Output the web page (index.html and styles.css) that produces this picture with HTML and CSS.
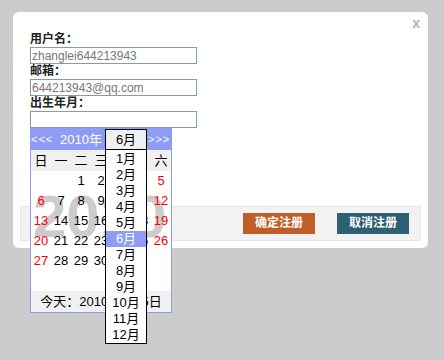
FILE: index.html
```html
<!DOCTYPE html>
<html lang="zh">
<head>
<meta charset="utf-8">
<title>注册</title>
<link rel="stylesheet" href="styles.css">
</head>
<body>
<div class="dialog">
  <span class="close">x</span>
  <div class="form">
    <div class="label">用户名：</div>
    <input class="text" type="text" value="zhanglei644213943">
    <div class="label">邮箱：</div>
    <input class="text" type="text" value="644213943@qq.com">
    <div class="label">出生年月：</div>
    <div class="date-field">
      <input class="text" type="text" value="">
      <div class="cal">
        <div class="cal-head">
          <span class="nav prev">&lt;&lt;&lt;</span>
          <span class="year">2010年</span>
          <span class="month-sel">6月</span>
          <span class="nav next">&gt;&gt;&gt;</span>
        </div>
        <div class="weekdays">
          <span>日</span><span>一</span><span>二</span><span>三</span><span>四</span><span>五</span><span>六</span>
        </div>
        <div class="cal-body">
          <div class="watermark">2010</div>
          <div class="days">
            <span></span><span></span><span>1</span><span>2</span><span>3</span><span>4</span><span class="we">5</span>
            <span class="we">6</span><span>7</span><span>8</span><span>9</span><span>10</span><span>11</span><span class="we">12</span>
            <span class="we">13</span><span>14</span><span>15</span><span>16</span><span>17</span><span>18</span><span class="we">19</span>
            <span class="we">20</span><span>21</span><span>22</span><span>23</span><span>24</span><span>25</span><span class="we">26</span>
            <span class="we">27</span><span>28</span><span>29</span><span>30</span><span></span><span></span><span></span>
            <span></span><span></span><span></span><span></span><span></span><span></span><span></span>
          </div>
        </div>
        <div class="cal-foot">今天：2010年6月5日</div>
        <ul class="month-list">
          <li>1月</li><li>2月</li><li>3月</li><li>4月</li><li>5月</li><li class="sel">6月</li>
          <li>7月</li><li>8月</li><li>9月</li><li>10月</li><li>11月</li><li>12月</li>
        </ul>
      </div>
    </div>
  </div>
  <div class="footer">
    <button class="btn ok">确定注册</button>
    <button class="btn cancel">取消注册</button>
  </div>
</div>
</body>
</html>
```
FILE: styles.css
```css
html, body {
  margin: 0;
  padding: 0;
}
body {
  background: #cccccc;
  width: 444px;
  height: 360px;
  overflow: hidden;
  font-family: "Liberation Sans", "Noto Sans CJK SC", sans-serif;
  font-size: 12px;
  color: #000;
}
.dialog {
  position: relative;
  box-sizing: border-box;
  margin: 12px 0 0 13px;
  width: 415px;
  height: 236px;
  padding: 20px 7px 7px;
  background: #fff;
  border-radius: 6px;
}
.close {
  position: absolute;
  top: 4px;
  right: 8px;
  font-size: 14px;
  line-height: 14px;
  font-weight: bold;
  color: #a9b3c0;
}
.form {
  padding-left: 10px;
}
.label {
  font-weight: bold;
  font-size: 12px;
  line-height: 15px;
  height: 15px;
  color: #222;
}
.text {
  display: block;
  box-sizing: border-box;
  margin: 0;
  width: 167px;
  height: 17px;
  padding: 0 1px;
  border: 1px solid #7f9db9;
  font-family: "Liberation Sans", "Noto Sans CJK SC", sans-serif;
  font-size: 12px;
  font-style: normal;
  color: #777777;
  background: #fff;
  outline: none;
}
.date-field {
  position: relative;
  width: 167px;
}
.cal {
  position: absolute;
  left: 0;
  top: 100%;
  z-index: 5;
  width: 140px;
  border: 1px solid #8e9cf6;
  background: #fff;
  font-size: 13px;
}
.cal-head {
  display: flex;
  align-items: center;
  height: 21px;
  background: #8e9cf6;
  color: #fff;
}
.nav {
  font-size: 11px;
  line-height: 21px;
  letter-spacing: 1px;
}
.prev {
  width: 29px;
}
.year {
  width: 45px;
  font-size: 13px;
  line-height: 21px;
}
.month-sel {
  box-sizing: border-box;
  width: 42px;
  height: 21px;
  border: 1px solid #000;
  background: #f0f0f0;
  color: #000;
  text-align: center;
  line-height: 19px;
}
.next {
  margin-left: 1px;
}
.weekdays {
  display: grid;
  grid-template-columns: repeat(7, 20px);
  height: 21px;
  background: #f0f0f0;
}
.weekdays span {
  text-align: center;
  line-height: 21px;
}
.cal-body {
  position: relative;
}
.watermark {
  position: absolute;
  left: 2px;
  top: 16px;
  font-size: 60px;
  line-height: 60px;
  font-weight: bold;
  color: #cccccc;
}
.days {
  position: relative;
  display: grid;
  grid-template-columns: repeat(7, 20px);
  grid-auto-rows: 20px;
}
.days span {
  text-align: center;
  line-height: 20px;
}
.days .we {
  color: #ff0000;
}
.cal-foot {
  height: 21px;
  line-height: 21px;
  background: #f0f0f0;
  text-align: center;
}
.month-list {
  position: absolute;
  left: 74px;
  top: 21px;
  box-sizing: border-box;
  width: 42px;
  margin: 0;
  padding: 1px 0 0;
  list-style: none;
  background: #fff;
  border: 1px solid #000;
  border-top: none;
}
.month-list li {
  height: 16px;
  line-height: 16px;
  text-align: center;
  font-size: 13px;
}
.month-list .sel {
  background: #8e9cf6;
  color: #fff;
}
.footer {
  box-sizing: border-box;
  margin-top: 78px;
  height: 35px;
  display: flex;
  justify-content: flex-end;
  align-items: center;
  gap: 22px;
  padding-right: 11px;
  background: #f2f2f2;
  border: 1px solid #e6e6e6;
}
.btn {
  width: 72px;
  height: 21px;
  margin: 0;
  padding: 0;
  border: none;
  color: #fff;
  font-family: "Liberation Sans", "Noto Sans CJK SC", sans-serif;
  font-size: 12px;
  font-weight: bold;
  line-height: 21px;
}
.ok {
  background: #bf5f27;
}
.cancel {
  background: #2e6074;
}
```
